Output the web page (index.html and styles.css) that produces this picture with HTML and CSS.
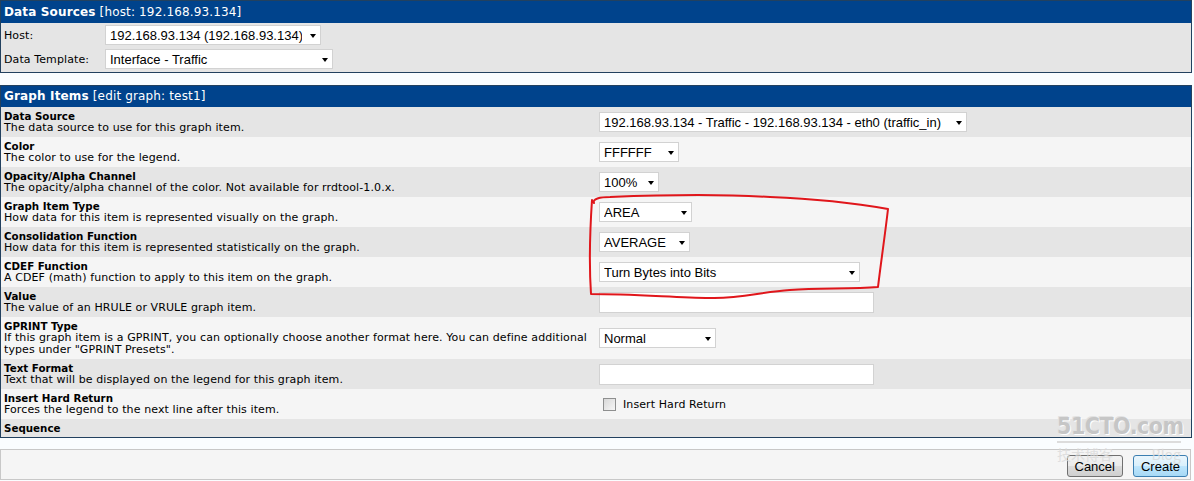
FILE: index.html
```html
<!DOCTYPE html>
<html lang="en">
  <head>
    <meta charset="UTF-8" />
    <title>Graph Items</title>
    <link rel="stylesheet" href="styles.css">
  </head>
  <body>
    <div class="page">
      <div class="panel panel-filter">
        <div class="panel-head"><b>Data Sources</b> [host: 192.168.93.134]</div>
        <div class="filter-row">
          <span class="filter-label">Host:</span>
          <span class="select"><select class="w-host"><option>192.168.93.134 (192.168.93.134)</option></select></span>
        </div>
        <div class="filter-row">
          <span class="filter-label">Data Template:</span>
          <span class="select"><select class="w-template"><option>Interface - Traffic</option></select></span>
        </div>
      </div>

      <div class="panel panel-items">
        <div class="panel-head"><b>Graph Items</b> [edit graph: test1]</div>
        <div class="items">
          <div class="item">
            <div class="item-label"><b>Data Source</b>The data source to use for this graph item.</div>
            <div><span class="select"><select class="w-source"><option>192.168.93.134 - Traffic - 192.168.93.134 - eth0 (traffic_in)</option></select></span></div>
          </div>
          <div class="item">
            <div class="item-label"><b>Color</b>The color to use for the legend.</div>
            <div><span class="select"><select class="w-color"><option>FFFFFF</option></select></span></div>
          </div>
          <div class="item">
            <div class="item-label"><b>Opacity/Alpha Channel</b>The opacity/alpha channel of the color. Not available for rrdtool-1.0.x.</div>
            <div><span class="select"><select class="w-opacity"><option>100%</option></select></span></div>
          </div>
          <div class="item">
            <div class="item-label"><b>Graph Item Type</b>How data for this item is represented visually on the graph.</div>
            <div><span class="select"><select class="w-type"><option>AREA</option></select></span></div>
          </div>
          <div class="item">
            <div class="item-label"><b>Consolidation Function</b>How data for this item is represented statistically on the graph.</div>
            <div><span class="select"><select class="w-cf"><option>AVERAGE</option></select></span></div>
          </div>
          <div class="item">
            <div class="item-label"><b>CDEF Function</b>A CDEF (math) function to apply to this item on the graph.</div>
            <div><span class="select"><select class="w-cdef"><option>Turn Bytes into Bits</option></select></span></div>
          </div>
          <div class="item">
            <div class="item-label"><b>Value</b>The value of an HRULE or VRULE graph item.</div>
            <div><input class="text-input" type="text"></div>
          </div>
          <div class="item">
            <div class="item-label"><b>GPRINT Type</b>If this graph item is a GPRINT, you can optionally choose another format here. You can define additional<br>types under "GPRINT Presets".</div>
            <div><span class="select"><select class="w-gprint"><option>Normal</option></select></span></div>
          </div>
          <div class="item">
            <div class="item-label"><b>Text Format</b>Text that will be displayed on the legend for this graph item.</div>
            <div><input class="text-input" type="text"></div>
          </div>
          <div class="item">
            <div class="item-label"><b>Insert Hard Return</b>Forces the legend to the next line after this item.</div>
            <div class="check"><span class="checkbox"></span>Insert Hard Return</div>
          </div>
          <div class="item">
            <div class="item-label"><b>Sequence</b></div>
            <div></div>
          </div>
        </div>
      </div>

      <div class="actions">
        <button class="btn">Cancel</button>
        <button class="btn btn-default">Create</button>
      </div>

      <!-- hand-drawn highlight from the screenshot -->
      <svg class="scribble" width="1194" height="481" viewBox="0 0 1194 481" xmlns="http://www.w3.org/2000/svg">
        <path d="M594 203 C 592 199, 600 197, 610 197 C 660 195, 720 194, 770 197 C 820 199, 860 204, 888 209 C 885 235, 881 262, 878 287 C 850 289, 820 288, 790 290 C 760 292, 740 299, 710 298 C 670 297, 630 294, 591 294 C 589 265, 590 230, 592 200" fill="none" stroke="#e0161b" stroke-width="2" stroke-linecap="round" stroke-linejoin="round"/>
      </svg>

      <div class="watermark">
        <div class="wm-logo">51CTO.com</div>
        <div class="wm-sub"><span>技术博客</span><span>Blog</span></div>
      </div>
    </div>
  </body>
</html>
```

FILE: styles.css
```css
body {
  margin: 0;
  background: #fafdff;
  font-family: "DejaVu Sans", Verdana, sans-serif;
  font-size: 11px;
  letter-spacing: 0.1px;
  color: #000;
}

.page {
  position: relative;
  width: 1192px;
}

.panel {
  border: 1px solid #22415f;
  background: #e5e5e5;
}

.panel-filter {
  padding-bottom: 1px;
}

.panel-filter .panel-head {
  height: 22px;
  line-height: 22px;
}

.panel-items {
  margin-top: 12px;
}

.panel-head {
  background: #00438c;
  color: #fff;
  font-size: 12px;
  letter-spacing: 0.15px;
  height: 21px;
  line-height: 21px;
  padding-left: 3px;
}

.filter-row {
  display: flex;
  align-items: center;
  height: 24px;
}

.filter-label {
  width: 101px;
  padding-left: 3px;
}

.select {
  position: relative;
  display: inline-block;
  vertical-align: middle;
}

.select select {
  -webkit-appearance: none;
  appearance: none;
  box-sizing: border-box;
  height: 20px;
  margin: 0;
  padding: 0 18px 0 4px;
  border: 1px solid #d2d2d2;
  border-radius: 0;
  background: #fff;
  color: #000;
  letter-spacing: 0;
  font: 13px "Liberation Sans", Arial, sans-serif;
}

.select::after {
  content: "";
  position: absolute;
  right: 5px;
  top: 9px;
  border-left: 3.5px solid transparent;
  border-right: 3.5px solid transparent;
  border-top: 4px solid #000;
  pointer-events: none;
}

.w-host { width: 216px; }
.w-template { width: 228px; }
.w-source { width: 368px; }
.w-color { width: 80px; }
.w-opacity { width: 60px; }
.w-type { width: 93px; }
.w-cf { width: 91px; }
.w-cdef { width: 261px; }
.w-gprint { width: 117px; }

.text-input {
  box-sizing: border-box;
  width: 275px;
  height: 21px;
  margin: 0;
  border: 1px solid #d2d2d2;
  background: #fff;
  vertical-align: middle;
}

.item {
  display: grid;
  grid-template-columns: 598px 1fr;
  align-items: center;
  padding: 3px 0;
  background: #e5e5e5;
}

.item:nth-child(even) {
  background: #f5f5f5;
}

.item-label {
  padding-left: 3px;
  line-height: 12px;
}

.item-label b {
  display: block;
  font-size: 10.3px;
  letter-spacing: 0;
}

.check {
  display: flex;
  align-items: center;
  padding-left: 4px;
}

.checkbox {
  box-sizing: border-box;
  width: 13px;
  height: 13px;
  margin-right: 7px;
  border: 1px solid #8e8f8f;
  background: linear-gradient(135deg, #d8d8d8, #f6f6f6);
}

.actions {
  box-sizing: border-box;
  width: 1191px;
  height: 31px;
  margin-top: 11px;
  padding: 0 2px 0 0;
  border: 1px solid #c8c8c8;
  background: #f5f5f5;
  display: flex;
  justify-content: flex-end;
  align-items: center;
  gap: 10px;
}

.btn {
  height: 22px;
  margin-top: 3px;
  padding: 0 7px;
  border: 1px solid #707070;
  border-radius: 3px;
  background: linear-gradient(#f2f2f2 0%, #ebebeb 50%, #dddddd 51%, #cfcfcf 100%);
  color: #000;
  letter-spacing: 0;
  font: 13px "Liberation Sans", Arial, sans-serif;
}

.btn-default {
  border-color: #3c7fb1;
  background: linear-gradient(#eaf6fd 0%, #d9f0fc 50%, #bee6fd 51%, #a7d9f5 100%);
}

.scribble {
  position: absolute;
  top: 0;
  left: 0;
  pointer-events: none;
}

.watermark {
  position: absolute;
  left: 1057px;
  top: 412px;
  width: 124px;
  pointer-events: none;
  color: #c6c6c6;
  letter-spacing: 0;
}

.wm-logo {
  font: bold 23px "DejaVu Sans Condensed", "DejaVu Sans", sans-serif;
  letter-spacing: -0.5px;
  line-height: 29px;
  text-shadow: 1px 1px 0 #fff, -1px -1px 0 #e2e2e2;
  border-bottom: 2px solid #dcdcdc;
}

.wm-sub {
  display: flex;
  justify-content: space-between;
  padding-top: 2px;
  font: 14px "Noto Sans CJK SC", sans-serif;
  color: #dadada;
  line-height: 18px;
  opacity: 0.8;
}
```
